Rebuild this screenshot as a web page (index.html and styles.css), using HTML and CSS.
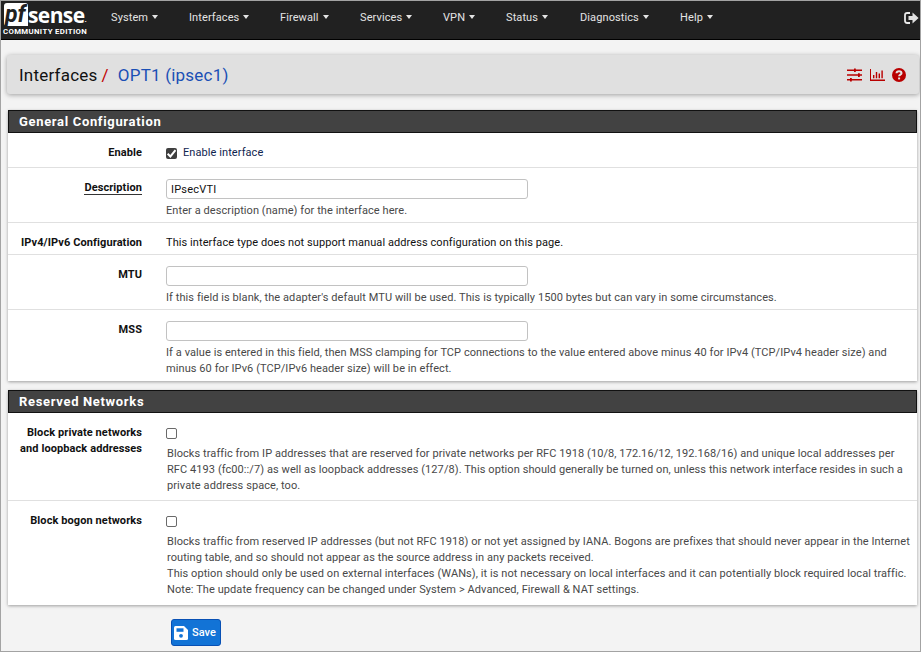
FILE: index.html
```html
<!DOCTYPE html>
<html lang="en">
<head>
<meta charset="utf-8">
<title>Interfaces: OPT1 (ipsec1)</title>
<link rel="stylesheet" href="styles.css">
</head>
<body>
<nav class="navbar">
  <a class="brand"><span class="logo"><span class="pf">pf</span><span class="sense">sense</span><span class="dot">.</span></span><span class="edition">COMMUNITY EDITION</span></a>
  <ul class="menu">
    <li class="m1">System</li><li class="m2">Interfaces</li><li class="m3">Firewall</li><li class="m4">Services</li><li class="m5">VPN</li><li class="m6">Status</li><li class="m7">Diagnostics</li><li class="m8">Help</li>
  </ul>
  <svg class="logout" viewBox="0 0 15 12" width="15" height="12"><path d="M6 1H3.2Q1 1 1 3.2v5.6Q1 11 3.2 11H6" fill="none" stroke="#e8e8e8" stroke-width="1.8"/><path d="M4.500 4h4V.6L14.600 6l-6.100 5.400V8h-4z" fill="#e0e0e0"/></svg>
</nav>
<header class="crumbs">
  <h1><span class="c1">Interfaces</span><span class="slash">/</span><span class="c2">OPT1 (ipsec1)</span></h1>
  <div class="tools">
    <svg viewBox="0 0 15 14" width="15" height="14" fill="#b90000"><path d="M0 1.500h15v1.500H0zM0 6.300h15v1.500H0zM0 11h15v1.500H0z"/><path d="M7 .5h1.800v3.600H7zM11 5.300h1.800v3.600H11zM3 10h1.800v3.600H3z"/></svg>
    <svg viewBox="0 0 15 14" width="15" height="14" fill="#b90000"><path d="M0 1h1v10.600h14V13H0zM3 7h1.400v3.300H3zM5.800 4h1.400v6.300H5.800zM8.600 5.400H10v4.900H8.600zM11.400 2.500h1.400v7.800h-1.400z"/></svg>
    <svg viewBox="0 0 14 14" width="14" height="14"><circle cx="7" cy="7" r="7" fill="#b90000"/><path d="M4.500 5.300C4.700 2.600 9.500 2.700 9.500 5.200 9.500 6.700 7.100 6.700 7.100 8.300" fill="none" stroke="#e4e4e4" stroke-width="2"/><path d="M6.100 9.500h2v1.900h-2z" fill="#e4e4e4"/></svg>
  </div>
</header>
<section class="panel general">
  <h2>General Configuration</h2>
  <div class="row r1"><label>Enable</label><div class="field"><div class="check"><span class="box on"><svg viewBox="0 0 10 10" width="11" height="11"><path d="M1.500 5.200 4 7.700 8.600 2" fill="none" stroke="#fff" stroke-width="1.800"/></svg></span><span class="t-enable">Enable interface</span></div></div></div>
  <div class="row r2"><label><span class="req">Description</span></label><div class="field"><div class="input">IPsecVTI</div><p class="help">Enter a description (name) for the interface here.</p></div></div>
  <div class="row r3"><label>IPv4/IPv6 Configuration</label><div class="field"><p class="static">This interface type does not support manual address configuration on this page.</p></div></div>
  <div class="row r4"><label>MTU</label><div class="field"><div class="input"></div><p class="help">If this field is blank, the adapter's default MTU will be used. This is typically 1500 bytes but can vary in some circumstances.</p></div></div>
  <div class="row r5"><label>MSS</label><div class="field"><div class="input"></div><p class="help">If a value is entered in this field, then MSS clamping for TCP connections to the value entered above minus 40 for IPv4 (TCP/IPv4 header size) and<br>minus 60 for IPv6 (TCP/IPv6 header size) will be in effect.</p></div></div>
</section>
<section class="panel reserved">
  <h2>Reserved Networks</h2>
  <div class="row r6"><label>Block private networks<br>and loopback addresses</label><div class="field"><div class="check"><span class="box"></span></div><p class="help">Blocks traffic from IP addresses that are reserved for private networks per RFC 1918 (10/8, 172.16/12, 192.168/16) and unique local addresses per<br>RFC 4193 (fc00::/7) as well as loopback addresses (127/8). This option should generally be turned on, unless this network interface resides in such a<br>private address space, too.</p></div></div>
  <div class="row r7"><label>Block bogon networks</label><div class="field"><div class="check"><span class="box"></span></div><p class="help">Blocks traffic from reserved IP addresses (but not RFC 1918) or not yet assigned by IANA. Bogons are prefixes that should never appear in the Internet<br>routing table, and so should not appear as the source address in any packets received.<br>This option should only be used on external interfaces (WANs), it is not necessary on local interfaces and it can potentially block required local traffic.<br>Note: The update frequency can be changed under System &gt; Advanced, Firewall &amp; NAT settings.</p></div></div>
</section>
<button class="save"><svg viewBox="0 0 14 14" width="14" height="14"><path d="M1.500 0H10l4 4v8.500Q14 14 12.500 14h-11Q0 14 0 12.500v-11Q0 0 1.500 0z" fill="#fff"/><path d="M2.500 2.300h7v3.500h-7z" fill="#1273d6"/><circle cx="7" cy="9.800" r="1.900" fill="#1273d6"/></svg><span>Save</span></button>
</body>
</html>
```
FILE: styles.css
```css
* { box-sizing: border-box; }
html { height: 100%; }
body {
  margin: 0;
  width: 921px;
  height: 652px;
  overflow: hidden;
  border: 1px solid #a3a3a3;
  background: #f3f3f3;
  font: 11px/16px Roboto, sans-serif;
  letter-spacing: 0.077px;
  color: #111;
  white-space: nowrap;
}
h1, h2, p, ul { margin: 0; padding: 0; }

.navbar {
  display: flex;
  height: 39px;
  background: #212121;
  border-bottom: 1px solid #000;
  color: #e4e4e4;
}
.brand { width: 88px; flex: none; padding: 2px 0 0 3px; color: #fff; }
.logo { display: flex; height: 23px; align-items: flex-start; }
.pf {
  width: 24px;
  height: 23px;
  border-radius: 3px 3px 0 3px;
  background: #fff;
  color: #212121;
  font: italic 700 23px/24px Roboto, sans-serif;
  letter-spacing: 0;
  padding-left: 1px;
}
.sense { font: 700 21px/25px "Open Sans", sans-serif; height: 23px; letter-spacing: -0.6px; }
.dot { font: 700 8px/34px Roboto, sans-serif; height: 23px; }
.edition { display: block; font: 700 7.8px/9px Roboto, sans-serif; letter-spacing: 0.35px; margin: 1px 0 0 -1px; }
.menu { display: flex; flex: 1; list-style: none; padding-left: 22px; }
.menu li { height: 16px; margin-top: 9px; flex: none; letter-spacing: 0.1px; }
.menu li::after {
  content: "";
  display: inline-block;
  margin-left: 4px;
  vertical-align: 2px;
  border: 3.5px solid transparent;
  border-top: 4px solid #e4e4e4;
  border-bottom: 0;
}
.m1 { width: 78px; } .m2 { width: 91px; } .m3 { width: 80px; } .m4 { width: 83px; }
.m5 { width: 63px; } .m6 { width: 74px; } .m7 { width: 100px; } .m8 { width: 40px; }
.logout { margin: 11px 1px 0 0; flex: none; }

.crumbs {
  display: flex;
  justify-content: space-between;
  height: 39px;
  margin: 15px 1px 0 6px;
  padding: 0 13px 0 12px;
  border-radius: 3px;
  background: #e0e0e0;
  box-shadow: 0 1px 5px rgba(0, 0, 0, .35);
}
h1 { display: flex; font: 400 17px/41px Roboto, sans-serif; letter-spacing: .22px; }
.slash { color: #c00000; margin: 0 9px 0 4px; }
.c2 { color: #1a4fb5; }
.tools { display: flex; align-items: center; gap: 7.5px; padding-top: 1px; }

.panel {
  margin: 16px 3px 0 7px;
  background: #fff;
  box-shadow: 0 1px 3px rgba(0, 0, 0, .35);
}
.reserved { margin-top: 9px; }
h2 {
  height: 23px;
  padding-left: 10px;
  background: #424242;
  border: 1px solid #111;
  color: #fff;
  font: 700 13px/21px Roboto, sans-serif;
  letter-spacing: .67px;
}
.row { display: flex; padding-top: 12px; border-bottom: 1px solid #e0e0e0; }
.row:last-child { border-bottom: 0; }
.row label { width: 134px; flex: none; margin-right: 24px; text-align: right; font-weight: 700; letter-spacing: .09px; }
.req { display: inline-block; line-height: 13px; border-bottom: 1px solid #333; }
.r1 { height: 35px; }
.r2 { height: 55px; }
.r3 { height: 32px; }
.r4 { height: 55px; }
.r5 { height: 71px; }
.r6 { height: 88px; }
.r7 { height: 104px; }
.input {
  width: 362px;
  height: 20px;
  margin-top: -1px;
  padding-left: 4px;
  border: 1px solid #c2c2c2;
  border-radius: 3px;
  line-height: 19px;
  letter-spacing: .2px;
}
.help { color: #484848; margin-top: 4px; }
.check { display: flex; height: 16px; align-items: center; color: #10254f; }
.box { width: 11px; height: 11px; margin-right: 6px; border: 1px solid #6a6a6a; border-radius: 2px; }
.box.on { background: #3f3f3f; border: 0; display: flex; }
.reserved .help { margin: 5px 0 0 1px; }
.save {
  display: flex;
  align-items: center;
  width: 50px;
  height: 27px;
  margin: 14px 0 0 170px;
  padding: 0 2px;
  border: 1px solid #0850b4;
  border-radius: 3px;
  background: #1273d6;
  color: #fff;
  font: 500 11px/16px Roboto, sans-serif;
}
.save svg { margin-right: 4px; flex: none; }
```
